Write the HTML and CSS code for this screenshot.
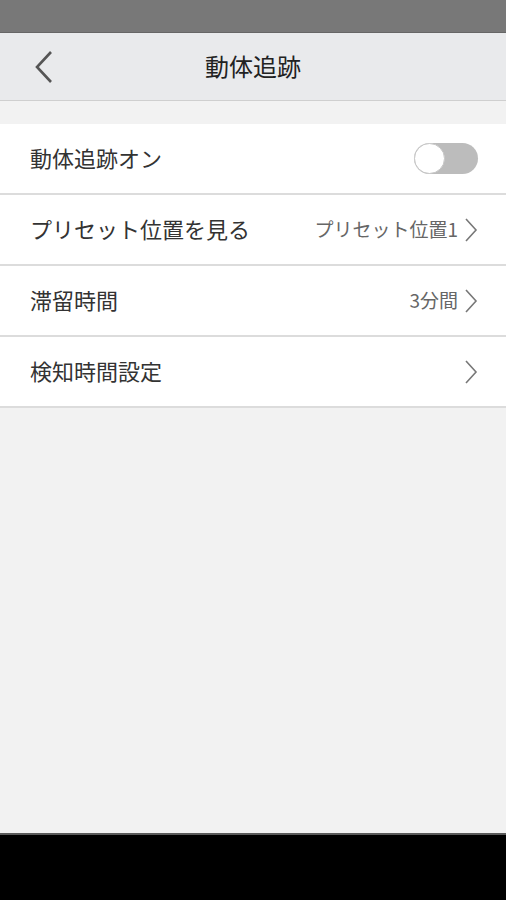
FILE: index.html
```html
<!DOCTYPE html>
<html lang="ja">
<head>
<meta charset="utf-8">
<link rel="stylesheet" href="styles.css">
</head>
<body>
<div class="screen">
  <div class="status"></div>
  <header class="header">
    <svg class="back" width="20" height="34" viewBox="0 0 20 34"><path d="M17 2 L3 17 L17 32" fill="none" stroke="#555" stroke-width="2.6"/></svg>
    <h1 class="title">動体追跡</h1>
  </header>
  <div class="list">
    <div class="row">
      <span class="label">動体追跡オン</span>
      <span class="toggle"><span class="knob"></span></span>
    </div>
    <div class="row">
      <span class="label">プリセット位置を見る</span>
      <span class="value">プリセット位置1</span>
      <svg class="chev" width="14" height="26" viewBox="0 0 14 26"><path d="M2 2 L12 13 L2 24" fill="none" stroke="#777" stroke-width="1.6"/></svg>
    </div>
    <div class="row">
      <span class="label">滞留時間</span>
      <span class="value">3分間</span>
      <svg class="chev" width="14" height="26" viewBox="0 0 14 26"><path d="M2 2 L12 13 L2 24" fill="none" stroke="#777" stroke-width="1.6"/></svg>
    </div>
    <div class="row">
      <span class="label">検知時間設定</span>
      <span class="value"></span>
      <svg class="chev" width="14" height="26" viewBox="0 0 14 26"><path d="M2 2 L12 13 L2 24" fill="none" stroke="#777" stroke-width="1.6"/></svg>
    </div>
  </div>
  <div class="fill"></div>
  <div class="navbar"></div>
</div>
</body>
</html>
```
FILE: styles.css
```css
* { box-sizing: border-box; }
html, body { margin: 0; padding: 0; }
body {
  font-family: "Noto Sans CJK JP", "Noto Sans", sans-serif;
  background: #f2f2f2;
}
.screen {
  width: 506px;
  height: 900px;
  display: flex;
  flex-direction: column;
  background: #f2f2f2;
}
.status {
  height: 33px;
  background: #787878;
  border-bottom: 1px solid #666;
}
.header {
  height: 68px;
  background: #e9eaec;
  border-bottom: 1px solid #cfcfcf;
  display: flex;
  align-items: center;
  justify-content: center;
  position: relative;
}
.back {
  position: absolute;
  left: 34px;
  top: 17px;
}
.title {
  margin: 0 0 2px;
  font-size: 24px;
  font-weight: 400;
  color: #222;
}
.list {
  margin-top: 23px;
  background: #fff;
}
.row {
  height: 71px;
  display: flex;
  align-items: center;
  padding: 0 28px 0 30px;
  border-bottom: 2px solid #dcdcdc;
}
.label {
  font-size: 22px;
  color: #333;
  flex: 1;
  padding-bottom: 3px;
}
.value {
  font-size: 19px;
  color: #666;
  margin-right: 6px;
  padding-bottom: 3px;
}
.chev { display: block; }
.toggle {
  width: 64px;
  height: 31px;
  border-radius: 16px;
  background: #bcbcbc;
  position: relative;
}
.knob {
  position: absolute;
  left: 0;
  top: 0;
  width: 31px;
  height: 31px;
  border-radius: 50%;
  background: #fff;
  border: 1px solid #c8c8c8;
}
.fill { flex: 1; }
.navbar {
  height: 67px;
  background: #000;
  border-top: 2px solid #5a5a5a;
}
```
